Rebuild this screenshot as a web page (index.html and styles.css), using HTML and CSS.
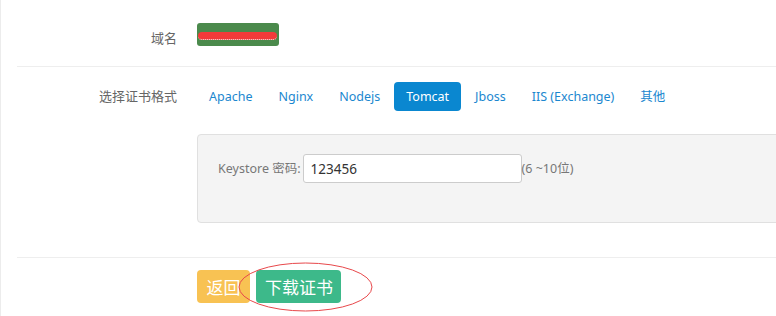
FILE: index.html
```html
<!DOCTYPE html>
<html lang="zh-CN">
<head>
    <meta charset="UTF-8">
    <meta name="viewport" content="width=device-width, initial-scale=1.0">
    <title>下载证书</title>
    <link rel="stylesheet" href="styles.css">
</head>
<body>

<div class="page">
    <div class="row row-domain">
        <div class="row-label">域名</div>
        <div class="row-body">
            <span class="domain-badge">
                <span class="redact"></span>
            </span>
        </div>
    </div>

    <div class="row row-format">
        <div class="row-label">选择证书格式</div>
        <div class="row-body">
            <ul class="pills">
                <li>Apache</li>
                <li>Nginx</li>
                <li>Nodejs</li>
                <li class="active">Tomcat</li>
                <li>Jboss</li>
                <li>IIS (Exchange)</li>
                <li>其他</li>
            </ul>
            <div class="panel">
                <label class="field-label" for="keystorePwd">Keystore 密码:</label>
                <input type="text" id="keystorePwd" class="field-input" value="123456">
                <span class="field-hint">(6 ~10位)</span>
            </div>
        </div>
    </div>

    <div class="row row-actions">
        <div class="row-label"></div>
        <div class="row-body">
            <button class="btn btn-back">返回</button>
            <button class="btn btn-download">下载证书</button>
        </div>
    </div>

    <!-- hand-drawn circle around the download button -->
    <svg class="mark" width="135" height="50" viewBox="0 0 135 50">
        <ellipse cx="67.5" cy="25" rx="66.5" ry="24" fill="none" stroke="#e8484b" stroke-width="1"/>
    </svg>
</div>

</body>
</html>
```

FILE: styles.css
```css
html, body {
    margin: 0;
    padding: 0;
    background: #fff;
    overflow: hidden;
}
body {
    font-family: "Noto Sans", "Noto Sans CJK SC", sans-serif;
    font-size: 13px;
    color: #666;
}
.page {
    position: relative;
    height: 316px;
    border-left: 1px solid #ececec;
    padding-left: 16px;
}
.row {
    display: flex;
    border-bottom: 1px solid #eeeeee;
}
.row-actions { border-bottom: none; }
.row-label {
    width: 160px;
    flex: none;
    text-align: right;
    padding-right: 20px;
    color: #666;
}
.row-body {
    flex: 1;
    min-width: 0;
}

/* domain */
.row-domain { height: 66px; }
.row-domain .row-label {
    padding-top: 28px;
    line-height: 20px;
}
.row-domain .row-body { padding-top: 23px; }
.domain-badge {
    position: relative;
    display: inline-block;
    width: 82px;
    height: 23px;
    background: #4b8a4c;
    border-radius: 3px;
    vertical-align: top;
}
/* masked domain name: red scribble with a bit of the white text peeking out */
.redact {
    position: absolute;
    left: 1px;
    top: 9px;
    width: 79px;
    height: 7px;
    background: #f43a3a;
    border-radius: 4px;
    border-bottom: 1px dotted #f4f4f4;
}

/* format */
.row-format { height: 190px; }
.row-format .row-label {
    padding-top: 15px;
    line-height: 29px;
}
.row-format .row-body { padding-top: 15px; }
.pills {
    display: flex;
    margin: 0;
    padding: 0;
    list-style: none;
}
.pills li {
    padding: 0 12px;
    margin-right: 2px;
    font-size: 12.5px;
    line-height: 29px;
    color: #1b87cf;
    border-radius: 4px;
}
.pills li.active {
    background: #0a87d0;
    color: #fff;
}
.panel {
    display: flex;
    align-items: flex-start;
    width: 640px;
    height: 89px;
    margin-top: 23px;
    padding: 19px 20px 0;
    box-sizing: border-box;
    background: #f4f4f4;
    border: 1px solid #e0e0e0;
    border-radius: 4px;
}
.field-label {
    font-size: 12.5px;
    line-height: 29px;
    margin-right: 2px;
    color: #777;
}
.field-input {
    width: 219px;
    height: 29px;
    box-sizing: border-box;
    padding: 0 7px;
    border: 1px solid #cccccc;
    border-radius: 3px;
    font-family: inherit;
    font-size: 13.5px;
    color: #333;
    background: #fff;
}
.field-hint {
    font-size: 12.5px;
    line-height: 29px;
    color: #777;
}

/* actions */
.row-actions .row-body { padding-top: 12px; }
.btn {
    height: 33px;
    padding: 0;
    border: none;
    border-radius: 4px;
    color: #fff;
    font-family: "Noto Sans CJK SC", sans-serif;
    font-size: 17px;
    white-space: nowrap;
    vertical-align: top;
}
.btn-back {
    width: 53px;
    background: #f8c253;
}
.btn-download {
    width: 85px;
    margin-left: 3px;
    background: #3db98a;
}
.mark {
    position: absolute;
    left: 237px;
    top: 262px;
}
```
